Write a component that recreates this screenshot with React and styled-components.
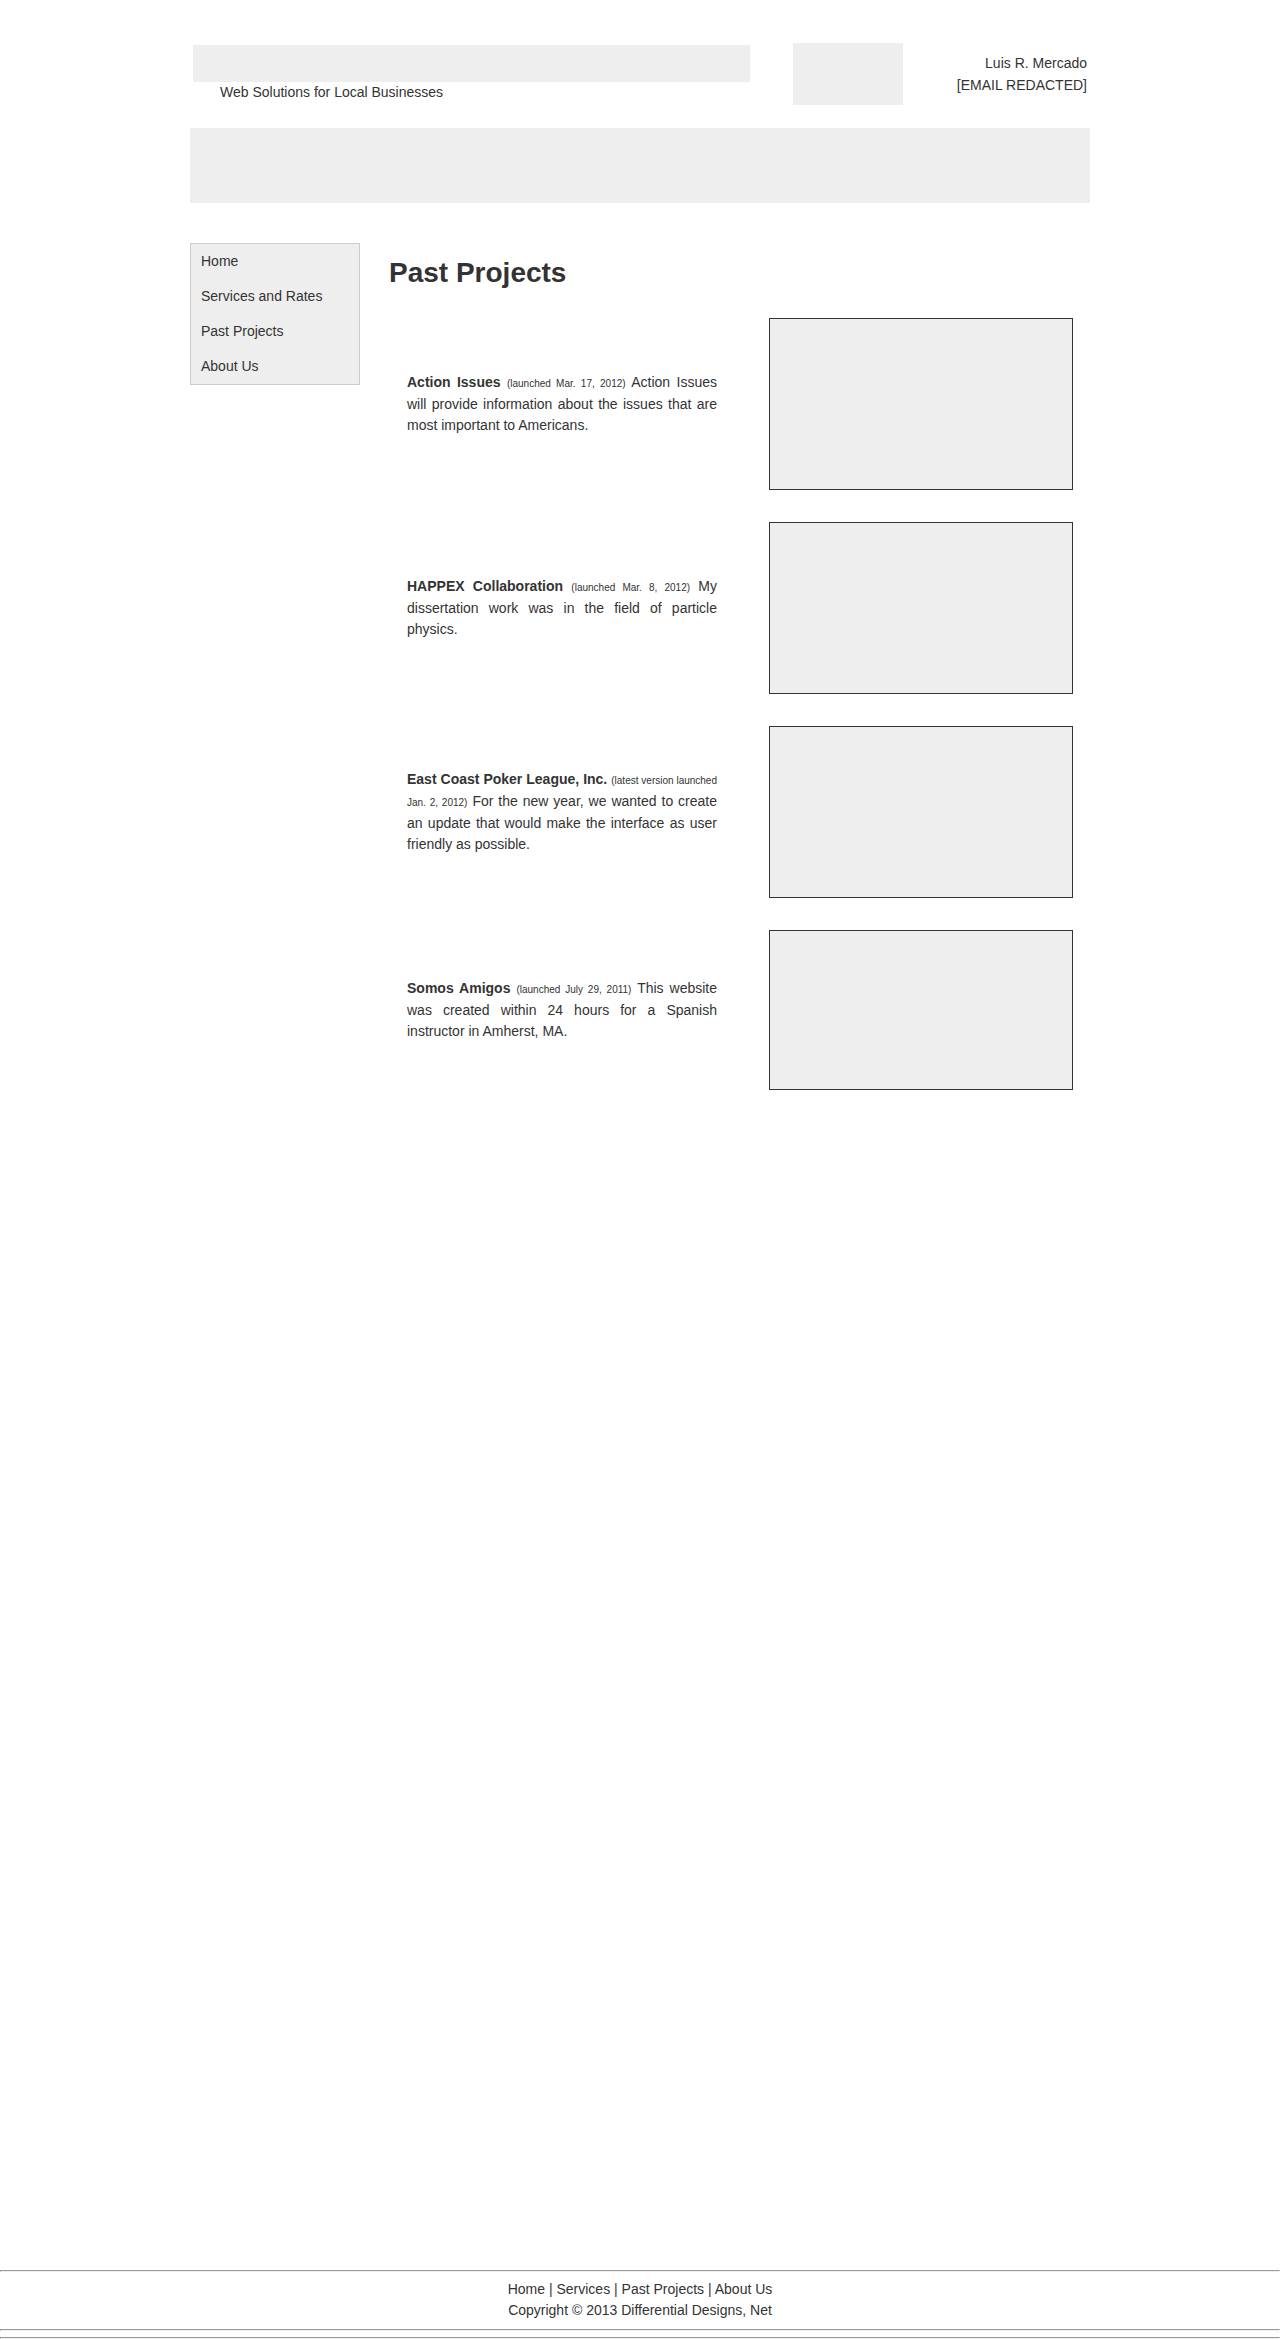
import React from "react";
import styled, { createGlobalStyle } from "styled-components";

const GlobalStyle = createGlobalStyle`
  html, body {
    margin: 0;
    padding: 0;
    background: #ffffff;
  }
  body {
    font-family: "Liberation Sans", Arial, Helvetica, sans-serif;
    font-size: 14px;
    color: #333333;
  }
`;

const Container = styled.div`
  width: 900px;
  margin: 0 auto;
`;

const Header = styled.header`
  display: flex;
  align-items: flex-start;
  padding-top: 43px;
`;

const Brand = styled.div`
  width: 557px;
  margin: 2px 0 0 3px;
`;

const LogoBar = styled.div`
  height: 37px;
  background: #eeeeee;
`;

const Tagline = styled.p`
  margin: 0;
  padding-left: 27px;
  line-height: 21px;
`;

const BadgeBox = styled.div`
  width: 110px;
  height: 62px;
  margin-left: 43px;
  background: #eeeeee;
`;

const Contact = styled.div`
  flex: 1;
  margin-top: 9px;
  padding-right: 3px;
  text-align: right;
  line-height: 22px;
`;

const Banner = styled.div`
  margin-top: 23px;
  height: 75px;
  background: #eeeeee;
`;

const Content = styled.div`
  display: flex;
  align-items: flex-start;
  margin-top: 40px;
  min-height: 2027px;
`;

const Sidebar = styled.nav`
  box-sizing: border-box;
  width: 170px;
  border: 1px solid #cccccc;
  background: #eeeeee;
`;

const NavItem = styled.a`
  display: block;
  padding-left: 10px;
  line-height: 35px;
  color: #333333;
  text-decoration: none;
`;

const Main = styled.main`
  flex: 1;
  margin-left: 29px;
`;

const Title = styled.h1`
  margin: 14px 0 0;
  font-size: 28px;
  line-height: 32px;
  font-weight: bold;
  color: #333333;
`;

const ProjectList = styled.div`
  display: flex;
  flex-direction: column;
  gap: 32px;
  margin-top: 29px;
`;

const ProjectRow = styled.section`
  display: flex;
  align-items: center;
  padding-left: 18px;
`;

const ProjectText = styled.p`
  width: 310px;
  margin: 0;
  text-align: justify;
  line-height: 21px;
`;

const ProjectName = styled.strong`
  font-weight: bold;
`;

const LaunchDate = styled.span`
  font-size: 10px;
`;

const Shot = styled.div`
  box-sizing: border-box;
  width: 304px;
  height: ${(p) => p.$h}px;
  margin-left: 52px;
  border: 1px solid #333333;
  background: #eeeeee;
`;

const Footer = styled.footer`
  width: 100%;
`;

const Rule = styled.hr`
  box-sizing: content-box;
  height: 0;
  margin: 0 0 ${(p) => p.$gap || 0}px;
  border-style: solid;
  border-width: 1px;
  border-color: #9a9a9a #eeeeee #eeeeee #9a9a9a;
`;

const FooterText = styled.div`
  padding: 7px 0 8px;
  text-align: center;
  line-height: 21px;
`;

const FooterLink = styled.a`
  color: #333333;
  text-decoration: none;
`;

const projects = [
  {
    name: "Action Issues",
    date: "(launched Mar. 17, 2012)",
    text: "Action Issues will provide information about the issues that are most important to Americans.",
    h: 172,
  },
  {
    name: "HAPPEX Collaboration",
    date: "(launched Mar. 8, 2012)",
    text: "My dissertation work was in the field of particle physics.",
    h: 172,
  },
  {
    name: "East Coast Poker League, Inc.",
    date: "(latest version launched Jan. 2, 2012)",
    text: "For the new year, we wanted to create an update that would make the interface as user friendly as possible.",
    h: 172,
  },
  {
    name: "Somos Amigos",
    date: "(launched July 29, 2011)",
    text: "This website was created within 24 hours for a Spanish instructor in Amherst, MA.",
    h: 160,
  },
];

const navItems = ["Home", "Services and Rates", "Past Projects", "About Us"];
const footerLinks = ["Home", "Services", "Past Projects", "About Us"];

export default function App() {
  return (
    <>
      <GlobalStyle />
      <Container>
        <Header>
          <Brand>
            <LogoBar />
            <Tagline>Web Solutions for Local Businesses</Tagline>
          </Brand>
          <BadgeBox />
          <Contact>
            <div>Luis R. Mercado</div>
            <div>[EMAIL REDACTED]</div>
          </Contact>
        </Header>
        <Banner />
        <Content>
          <Sidebar>
            {navItems.map((item) => (
              <NavItem key={item} href="#">
                {item}
              </NavItem>
            ))}
          </Sidebar>
          <Main>
            <Title>Past Projects</Title>
            <ProjectList>
              {projects.map((p) => (
                <ProjectRow key={p.name}>
                  <ProjectText>
                    <ProjectName>{p.name}</ProjectName> <LaunchDate>{p.date}</LaunchDate> {p.text}
                  </ProjectText>
                  <Shot $h={p.h} />
                </ProjectRow>
              ))}
            </ProjectList>
          </Main>
        </Content>
      </Container>
      <Footer>
        <Rule />
        <FooterText>
          <div>
            {footerLinks.map((l, i) => (
              <React.Fragment key={l}>
                {i > 0 && " | "}
                <FooterLink href="#">{l}</FooterLink>
              </React.Fragment>
            ))}
          </div>
          <div>Copyright © 2013 Differential Designs, Net</div>
        </FooterText>
        <Rule $gap={6} />
        <Rule />
      </Footer>
    </>
  );
}
